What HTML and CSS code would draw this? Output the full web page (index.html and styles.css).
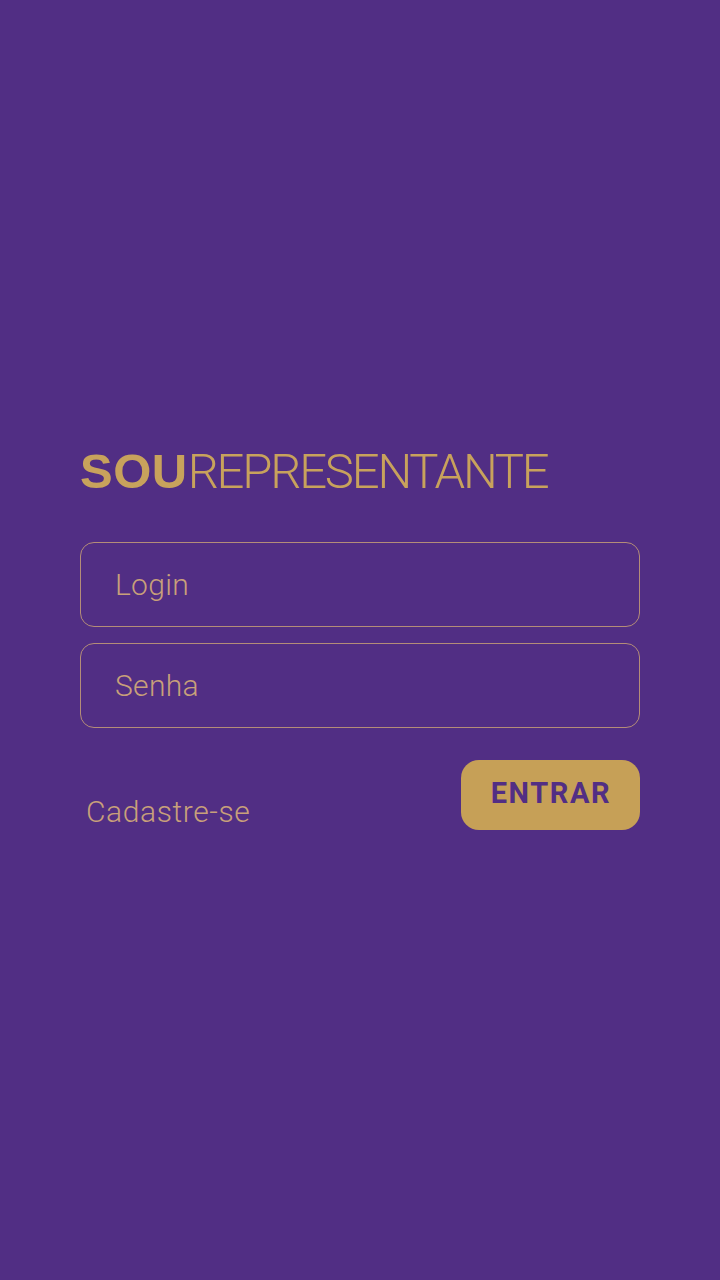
FILE: index.html
```html
<!DOCTYPE html>
<html lang="pt">
<head>
<meta charset="utf-8">
<title>Sou Representante</title>
<link rel="stylesheet" href="styles.css">
</head>
<body>
<main class="screen">
  <h1 class="brand"><span class="brand-bold">SOU</span><span class="brand-light">REPRESENTANTE</span></h1>
  <form class="form">
    <label class="field"><input class="input" type="text" placeholder="Login"></label>
    <label class="field"><input class="input" type="password" placeholder="Senha"></label>
    <div class="actions">
      <a class="signup" href="#">Cadastre-se</a>
      <button class="btn" type="button">ENTRAR</button>
    </div>
  </form>
</main>
</body>
</html>
```
FILE: styles.css
```css
* { box-sizing: border-box; }
html, body {
  margin: 0;
  padding: 0;
  background: #512e84;
}
body {
  width: 720px;
  height: 1280px;
  font-family: Roboto, "Liberation Sans", sans-serif;
}
.screen {
  padding: 443px 80px 0 80px;
}
.brand {
  margin: 0 0 42px 0;
  font-size: 49px;
  line-height: 56px;
  color: #c8a25c;
  white-space: nowrap;
  letter-spacing: 0;
}
.brand-bold {
  font-family: "Liberation Sans", Arial, sans-serif;
  font-weight: 700;
  letter-spacing: 0.5px;
}
.brand-light {
  font-weight: 300;
  letter-spacing: -2.2px;
}
.form {
  display: flex;
  flex-direction: column;
  gap: 16px;
}
.field {
  display: block;
}
.input {
  display: block;
  width: 560px;
  height: 85px;
  border: 1px solid #b48d78;
  border-radius: 14px;
  background: transparent;
  padding: 0 34px;
  font-family: Roboto, sans-serif;
  font-weight: 300;
  font-size: 30px;
  letter-spacing: 0.3px;
  color: #c8a07a;
  outline: none;
}
.input::placeholder {
  color: #c8a07a;
  opacity: 1;
}
.actions {
  display: flex;
  justify-content: space-between;
  align-items: flex-end;
  margin-top: 16px;
}
.signup {
  margin-left: 6px;
  font-weight: 300;
  font-size: 30px;
  line-height: 36px;
  letter-spacing: 0.6px;
  color: #c8a07a;
  text-decoration: none;
}
.btn {
  width: 179px;
  height: 70px;
  border: none;
  border-radius: 18px;
  background: #c6a057;
  color: #522e84;
  font-family: Roboto, sans-serif;
  font-weight: 700;
  font-size: 29px;
  letter-spacing: 1.6px;
  padding: 0 0 4px 1px;
}
```
